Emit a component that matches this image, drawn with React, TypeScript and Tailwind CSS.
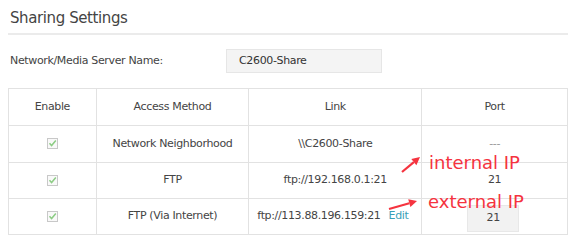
import React from "react";

const Check = () => (
  <svg width="11" height="11" viewBox="0 0 11 11" className="inline-block">
    <rect x="0.5" y="0.5" width="10" height="10" fill="#f9f9f9" stroke="#c8c8c8" />
    <path d="M2.5 5.2 L4.6 7.6 L8.8 2.6" fill="none" stroke="#8ccc84" strokeWidth="1.5" />
  </svg>
);

const Arrow = ({ x1, y1, x2, y2 }: { x1: number; y1: number; x2: number; y2: number }) => {
  const ang = Math.atan2(y2 - y1, x2 - x1);
  const hl = 8;
  const hw = 4;
  const bx = x2 - hl * Math.cos(ang);
  const by = y2 - hl * Math.sin(ang);
  const px = -Math.sin(ang) * hw;
  const py = Math.cos(ang) * hw;
  return (
    <g>
      <line x1={x1} y1={y1} x2={bx} y2={by} stroke="#f5333f" strokeWidth="2.2" />
      <polygon points={`${x2},${y2} ${bx + px},${by + py} ${bx - px},${by - py}`} fill="#f5333f" />
    </g>
  );
};

export default function App() {
  const font = { fontFamily: "Tahoma, 'DejaVu Sans', sans-serif" };
  return (
    <div className="relative w-[580px] h-[246px] bg-white text-[#333]" style={font}>
      <div className="pl-[8px] pr-[12px] pt-[9px]">
        <div className="pl-[2px] text-[15px] leading-[18px] text-[#444] tracking-[-0.4px]">Sharing Settings</div>
        <div className="mt-[6px] h-[2px] bg-[#ebebeb]" />
        <div className="mt-[14px] flex items-center h-[24px]">
          <div className="w-[218px] pl-[2px] text-[11px] text-[#444] tracking-[-0.35px]">Network/Media Server Name:</div>
          <div className="w-[156px] h-[24px] bg-[#f4f4f4] border border-[#e6e6e6] flex items-center pl-[12px] text-[11px] text-[#333] tracking-[-0.35px]">
            C2600-Share
          </div>
        </div>
        <table className="mt-[15px] w-[560px] border-collapse text-[11px] text-[#444] tracking-[-0.35px]">
          <colgroup>
            <col className="w-[88px]" />
            <col className="w-[153px]" />
            <col className="w-[173px]" />
            <col className="w-[146px]" />
          </colgroup>
          <thead>
            <tr className="h-[37px]">
              <th className="border border-[#e2e2e2] font-normal">Enable</th>
              <th className="border border-[#e2e2e2] font-normal">Access Method</th>
              <th className="border border-[#e2e2e2] font-normal">Link</th>
              <th className="border border-[#e2e2e2] font-normal">Port</th>
            </tr>
          </thead>
          <tbody>
            <tr className="h-[37px]">
              <td className="border border-[#e2e2e2] text-center"><Check /></td>
              <td className="border border-[#e2e2e2] text-center">Network Neighborhood</td>
              <td className="border border-[#e2e2e2] text-center">\\C2600-Share</td>
              <td className="border border-[#e2e2e2] text-center text-[#999]">---</td>
            </tr>
            <tr className="h-[36px]">
              <td className="border border-[#e2e2e2] text-center"><Check /></td>
              <td className="border border-[#e2e2e2] text-center">FTP</td>
              <td className="border border-[#e2e2e2] text-center">ftp://192.168.0.1:21</td>
              <td className="border border-[#e2e2e2] text-center">21</td>
            </tr>
            <tr className="h-[36px]">
              <td className="border border-[#e2e2e2] text-center"><Check /></td>
              <td className="border border-[#e2e2e2] text-center">FTP (Via Internet)</td>
              <td className="border border-[#e2e2e2] pl-[8px]">
                ftp://113.88.196.159:21
                <span className="ml-[8px] text-[#3a9fb8]">Edit</span>
              </td>
              <td className="border border-[#e2e2e2]">
                <div className="ml-[45px] mt-[4px] w-[52px] h-[27px] bg-[#f2f2f2] border border-[#e8e8e8] flex items-center justify-center">21</div>
              </td>
            </tr>
          </tbody>
        </table>
      </div>
      <svg className="absolute left-0 top-0" width="580" height="246">
        <Arrow x1={402} y1={172} x2={420} y2={157} />
        <Arrow x1={389} y1={209} x2={417} y2={201} />
      </svg>
      <div className="absolute left-[429px] top-[152px] text-[18px] leading-[22px] text-[#f5333f]">internal IP</div>
      <div className="absolute left-[428px] top-[191px] text-[18px] leading-[22px] text-[#f5333f]">external IP</div>
    </div>
  );
}
